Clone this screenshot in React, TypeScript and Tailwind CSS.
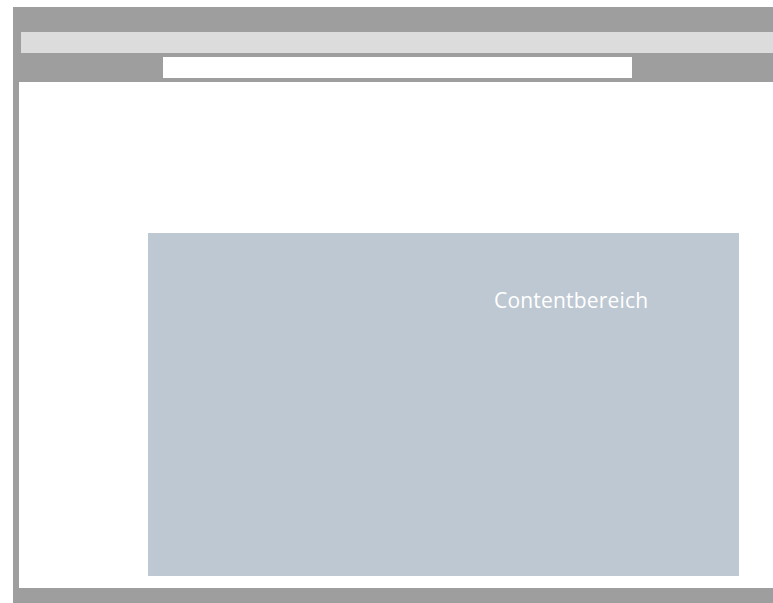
export default function App() {
  return (
    <div className="w-[773px] h-[603px] bg-white pt-[7px] pl-[13px] overflow-hidden">
      <div className="flex h-full flex-col bg-[#9e9e9e]">
        <div className="h-[25px] shrink-0" />
        <div className="ml-[8px] h-[21px] shrink-0 bg-[#dcdcdc]" />
        <div className="flex h-[29px] shrink-0 items-start pt-[4px] pl-[150px]">
          <div className="h-[21px] w-[469px] bg-white" />
        </div>
        <div className="ml-[6px] mb-[15px] flex-1 bg-white pt-[151px] pl-[129px] pb-[12px]">
          <div className="h-[343px] w-[591px] bg-[#bec8d2] pl-[346px] pt-[53px]">
            <span
              className="block text-[21px] leading-[28px] tracking-[0.2px] text-white"
              style={{ fontFamily: '"Open Sans", sans-serif' }}
            >
              Contentbereich
            </span>
          </div>
        </div>
      </div>
    </div>
  );
}
